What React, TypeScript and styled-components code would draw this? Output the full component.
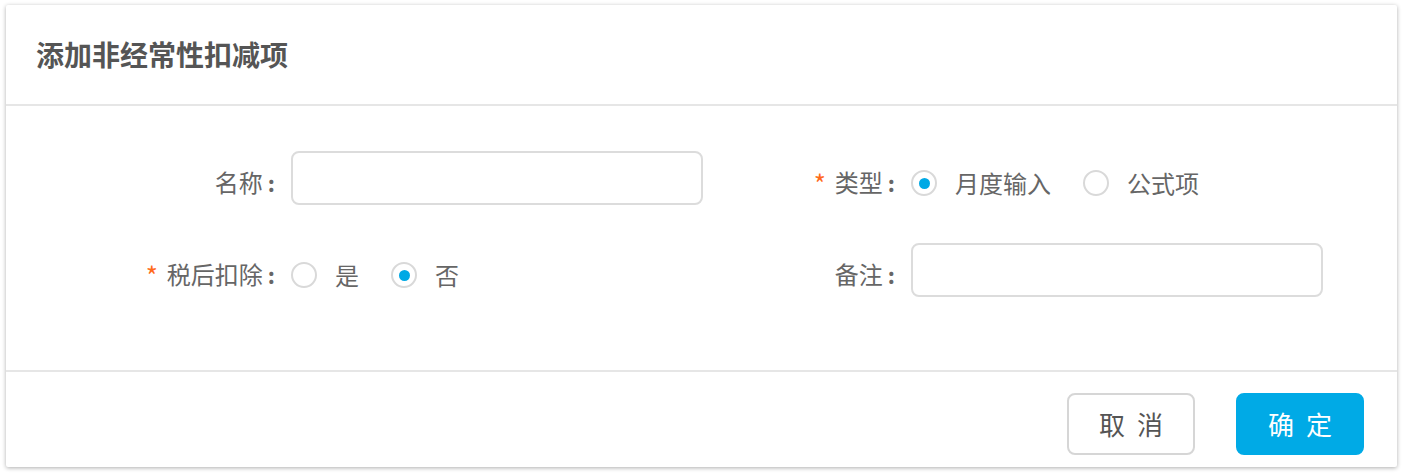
import React, { useState } from "react";
import styled, { createGlobalStyle } from "styled-components";

const GlobalStyle = createGlobalStyle`
  html, body { margin: 0; padding: 0; background: #ffffff; }
  body {
    font-family: "Noto Sans CJK SC", "Noto Sans", "Liberation Sans", sans-serif;
    color: #666;
  }
  * { box-sizing: border-box; }
`;

const Page = styled.div`
  padding: 5px 7px 7px 6px;
`;

const Dialog = styled.div`
  width: 1391px;
  height: 462px;
  background: #fff;
  border-radius: 2px;
  box-shadow: 0 1px 4px rgba(0, 0, 0, 0.32);
  display: flex;
  flex-direction: column;
`;

const Header = styled.div`
  height: 101px;
  padding: 0 30px;
  display: flex;
  align-items: center;
  border-bottom: 2px solid #e6e6e6;
  flex-shrink: 0;
`;

const Title = styled.h2`
  margin: 0;
  font-size: 28px;
  font-weight: 700;
  color: #555;
  line-height: 1;
  padding-bottom: 2px;
`;

const Body = styled.div`
  flex: 1;
  padding: 45px 0 0 95px;
  border-bottom: 2px solid #e6e6e6;
`;

const Grid = styled.div`
  display: grid;
  grid-template-columns: 620px 620px;
  row-gap: 38px;
`;

const Item = styled.div`
  display: grid;
  grid-template-columns: 190px 1fr;
  align-items: center;
  height: 54px;
`;

const Label = styled.label`
  display: flex;
  justify-content: flex-end;
  align-items: center;
  padding-right: 16px;
  padding-top: 7px;
  font-size: 24px;
  color: #666;
  white-space: nowrap;
  line-height: 1;
`;

const Colon = styled.span`
  margin-left: 5px;
  font-size: 22px;
  font-weight: 700;
`;

const Star = styled.span`
  color: #ff6a1a;
  margin-right: 9px;
  font-size: 26px;
  position: relative;
  top: 1px;
`;

const Input = styled.input`
  width: 412px;
  height: 54px;
  border: 2px solid #dcdcdc;
  border-radius: 8px;
  outline: none;
  padding: 0 12px;
  font-size: 22px;
  font-family: inherit;
  color: #555;
  background: #fff;
`;

const RadioGroup = styled.div`
  display: flex;
  align-items: center;
  padding-top: 10px;
`;

const RadioItem = styled.label`
  display: flex;
  align-items: center;
  margin-right: 32px;
  cursor: pointer;
`;

const Circle = styled.span<{ $checked: boolean }>`
  width: 26px;
  height: 26px;
  border-radius: 50%;
  border: 2px solid #d9d9d9;
  display: flex;
  align-items: center;
  justify-content: center;
  flex-shrink: 0;
  &::after {
    content: "";
    width: 11px;
    height: 11px;
    border-radius: 50%;
    background: ${(p) => (p.$checked ? "#00a9e5" : "transparent")};
  }
`;

const RadioText = styled.span`
  margin-left: 18px;
  font-size: 24px;
  color: #666;
  line-height: 1;
`;

const Footer = styled.div`
  height: 95px;
  display: flex;
  justify-content: flex-end;
  align-items: flex-start;
  padding: 21px 33px 0 0;
  gap: 41px;
`;

const Button = styled.button<{ $primary?: boolean }>`
  width: 128px;
  height: 62px;
  border-radius: 8px;
  font-family: inherit;
  font-size: 26px;
  letter-spacing: 12px;
  text-indent: 12px;
  cursor: pointer;
  border: 2px solid ${(p) => (p.$primary ? "#00aae6" : "#d6d6d6")};
  background: ${(p) => (p.$primary ? "#00aae6" : "#fff")};
  color: ${(p) => (p.$primary ? "#fff" : "#555")};
  line-height: 1;
`;

function Radio({
  options,
  value,
  onChange,
}: {
  options: string[];
  value: string;
  onChange: (v: string) => void;
}) {
  return (
    <RadioGroup>
      {options.map((o) => (
        <RadioItem key={o} onClick={() => onChange(o)}>
          <Circle $checked={value === o} />
          <RadioText>{o}</RadioText>
        </RadioItem>
      ))}
    </RadioGroup>
  );
}

function FieldLabel({ text, required }: { text: string; required?: boolean }) {
  return (
    <Label>
      {required && <Star>*</Star>}
      {text}
      <Colon>:</Colon>
    </Label>
  );
}

export default function App() {
  const [type, setType] = useState("月度输入");
  const [after, setAfter] = useState("否");
  return (
    <>
      <GlobalStyle />
      <Page>
        <Dialog>
          <Header>
            <Title>添加非经常性扣减项</Title>
          </Header>
          <Body>
            <Grid>
              <Item>
                <FieldLabel text="名称" />
                <Input />
              </Item>
              <Item>
                <FieldLabel text="类型" required />
                <Radio options={["月度输入", "公式项"]} value={type} onChange={setType} />
              </Item>
              <Item>
                <FieldLabel text="税后扣除" required />
                <Radio options={["是", "否"]} value={after} onChange={setAfter} />
              </Item>
              <Item>
                <FieldLabel text="备注" />
                <Input />
              </Item>
            </Grid>
          </Body>
          <Footer>
            <Button>取消</Button>
            <Button $primary>确定</Button>
          </Footer>
        </Dialog>
      </Page>
    </>
  );
}
